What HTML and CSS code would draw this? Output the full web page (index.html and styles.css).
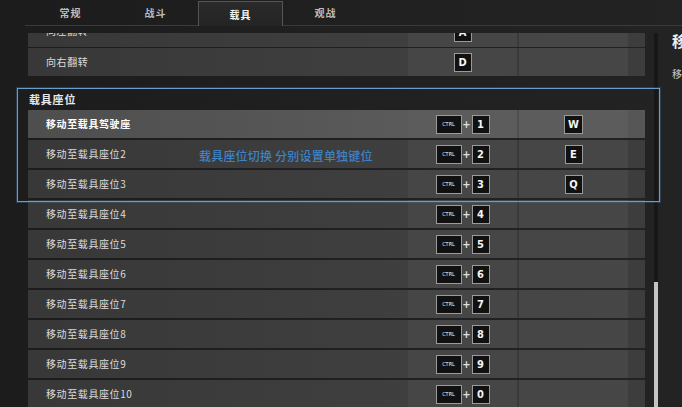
FILE: index.html
```html
<!DOCTYPE html>
<html lang="zh">
<head>
<meta charset="utf-8">
<link rel="stylesheet" href="styles.css">
</head>
<body>
<div class="page">
  <div class="tabs">
    <div class="tab">常规</div>
    <div class="tab">战斗</div>
    <div class="tab active">载具</div>
    <div class="tab">观战</div>
  </div>
  <div class="viewport">
    <div class="list">
      <div class="row cut"><div class="label">向左翻转</div><div class="key"><span class="kb">A</span></div><div class="div"></div><div class="key"></div><div class="tail"></div></div>
      <div class="row"><div class="label">向右翻转</div><div class="key"><span class="kb">D</span></div><div class="div"></div><div class="key"></div><div class="tail"></div></div>
      <div class="section">载具座位</div>
      <div class="row hi"><div class="label">移动至载具驾驶座</div><div class="key"><span class="kb ctrl">CTRL</span><span class="plus">+</span><span class="kb">1</span></div><div class="div"></div><div class="key"><span class="kb">W</span></div><div class="tail"></div></div>
      <div class="row"><div class="label">移动至载具座位2</div><div class="key"><span class="kb ctrl">CTRL</span><span class="plus">+</span><span class="kb">2</span></div><div class="div"></div><div class="key"><span class="kb">E</span></div><div class="tail"></div></div>
      <div class="row"><div class="label">移动至载具座位3</div><div class="key"><span class="kb ctrl">CTRL</span><span class="plus">+</span><span class="kb">3</span></div><div class="div"></div><div class="key"><span class="kb">Q</span></div><div class="tail"></div></div>
      <div class="row"><div class="label">移动至载具座位4</div><div class="key"><span class="kb ctrl">CTRL</span><span class="plus">+</span><span class="kb">4</span></div><div class="div"></div><div class="key"></div><div class="tail"></div></div>
      <div class="row"><div class="label">移动至载具座位5</div><div class="key"><span class="kb ctrl">CTRL</span><span class="plus">+</span><span class="kb">5</span></div><div class="div"></div><div class="key"></div><div class="tail"></div></div>
      <div class="row"><div class="label">移动至载具座位6</div><div class="key"><span class="kb ctrl">CTRL</span><span class="plus">+</span><span class="kb">6</span></div><div class="div"></div><div class="key"></div><div class="tail"></div></div>
      <div class="row"><div class="label">移动至载具座位7</div><div class="key"><span class="kb ctrl">CTRL</span><span class="plus">+</span><span class="kb">7</span></div><div class="div"></div><div class="key"></div><div class="tail"></div></div>
      <div class="row"><div class="label">移动至载具座位8</div><div class="key"><span class="kb ctrl">CTRL</span><span class="plus">+</span><span class="kb">8</span></div><div class="div"></div><div class="key"></div><div class="tail"></div></div>
      <div class="row"><div class="label">移动至载具座位9</div><div class="key"><span class="kb ctrl">CTRL</span><span class="plus">+</span><span class="kb">9</span></div><div class="div"></div><div class="key"></div><div class="tail"></div></div>
      <div class="row"><div class="label">移动至载具座位10</div><div class="key"><span class="kb ctrl">CTRL</span><span class="plus">+</span><span class="kb">0</span></div><div class="div"></div><div class="key"></div><div class="tail"></div></div>
    </div>
    <div class="track"><div class="thumb"></div></div>
    <div class="side">
      <div class="side-title">移</div>
      <div class="side-text">移</div>
    </div>
  </div>
</div>
<div class="annot-box"></div>
<div class="annot-text">载具座位切换 分别设置单独键位</div>
</body>
</html>
```
FILE: styles.css
```css
html, body {
  margin: 0;
  padding: 0;
  width: 682px;
  height: 407px;
  overflow: hidden;
  background: #1f1f1f;
  font-family: "Noto Sans CJK SC", "Noto Sans", sans-serif;
  color: #ddd;
}
.page {
  width: 682px;
  height: 407px;
  display: flex;
  flex-direction: column;
  background: linear-gradient(90deg, #1c1c1c 0%, #202020 50%, #232323 100%);
}
.tabs {
  display: flex;
  height: 25px;
  margin-left: 25px;
  padding-left: 3px;
  border-bottom: 1px solid #3a3a3a;
}
.tab {
  width: 85px;
  height: 25px;
  display: flex;
  align-items: center;
  justify-content: center;
  font-size: 10px;
  font-weight: 700;
  letter-spacing: 1px;
  color: #bdbdbd;
  box-sizing: border-box;
}
.tab.active {
  margin-top: 1px;
  border: 1px solid #555;
  border-bottom: none;
  background: linear-gradient(180deg, #2a2a2a, #242424);
  color: #f2f2f2;
  margin-bottom: -1px;
  height: 25px;
}
.viewport {
  margin-top: 7px;
  height: 374px;
  overflow: hidden;
  display: flex;
  align-items: flex-start;
}
.list {
  margin-left: 28px;
  margin-top: -19px;
  width: 617px;
  display: flex;
  flex-direction: column;
  gap: 2px;
  flex: none;
}
.row {
  height: 28px;
  display: grid;
  grid-template-columns: 380px 109px 2px 109px 17px;
  box-shadow: inset 0 -1px 0 #2a2a2a;
}
.row.cut {
  height: 32px;
}
.row.cut .label {
  line-height: 33px;
}
.row.cut .key {
  padding-top: 3px;
}
.label {
  padding-left: 18px;
  line-height: 28px;
  font-size: 10px;
  letter-spacing: 0.6px;
  color: #dcdcdc;
  background: linear-gradient(90deg, #383838 0%, #3c3c3c 60%, #3f3f3f 100%);
  white-space: nowrap;
}
.key {
  display: flex;
  align-items: center;
  justify-content: center;
  background: #464646;
}
.div {
  background: #3a3a3a;
}
.tail {
  background: #3d3d3d;
}
.row.hi .label {
  background: linear-gradient(90deg, #4e4e4e 0%, #555 60%, #5a5a5a 100%);
  color: #fff;
  font-weight: 700;
}
.row.hi .key { background: #5c5c5c; }
.row.hi .div { background: #4f4f4f; }
.row.hi .tail { background: #565656; }
.kb {
  box-sizing: border-box;
  height: 19px;
  min-width: 18px;
  padding: 0 3px;
  background: #111;
  border: 1px solid #9a9a9a;
  color: #f4f4f4;
  font-family: "DejaVu Sans", sans-serif;
  font-stretch: condensed;
  font-weight: 700;
  font-size: 11px;
  display: flex;
  align-items: center;
  justify-content: center;
}
.kb.ctrl {
  width: 26px;
  padding: 0;
  font-size: 5.5px;
  font-weight: 400;
  letter-spacing: 0;
}
.plus {
  width: 10px;
  text-align: center;
  font-family: "DejaVu Sans", sans-serif;
  font-weight: 700;
  font-size: 10px;
  color: #e0e0e0;
}
.section {
  height: 30px;
  display: flex;
  align-items: flex-end;
  padding-left: 1px;
  padding-bottom: 1px;
  box-sizing: border-box;
  font-size: 11px;
  font-weight: 700;
  letter-spacing: 0.8px;
  color: #e8e8e8;
}
.track {
  margin-left: 9px;
  width: 4px;
  height: 374px;
  flex: none;
  background: #171717;
}
.thumb {
  margin-top: 249px;
  height: 125px;
  background: #c4c4c4;
}
.side {
  margin-left: 14px;
  flex: none;
  width: 40px;
}
.side-title {
  font-size: 15px;
  font-weight: 700;
  line-height: 16px;
  color: #eee;
}
.side-text {
  margin-top: 17px;
  font-size: 10px;
  color: #ccc;
}
.annot-box {
  position: absolute;
  left: 17px;
  top: 88px;
  width: 641px;
  height: 112px;
  border: 1px solid #6a9ccc;
  box-shadow: 0 0 0 1px rgba(50, 100, 150, 0.45);
}
.annot-text {
  position: absolute;
  left: 199px;
  top: 148px;
  font-size: 12px;
  line-height: 16px;
  color: #3f82c6;
  font-weight: 500;
  letter-spacing: 0.2px;
  white-space: nowrap;
}
```
